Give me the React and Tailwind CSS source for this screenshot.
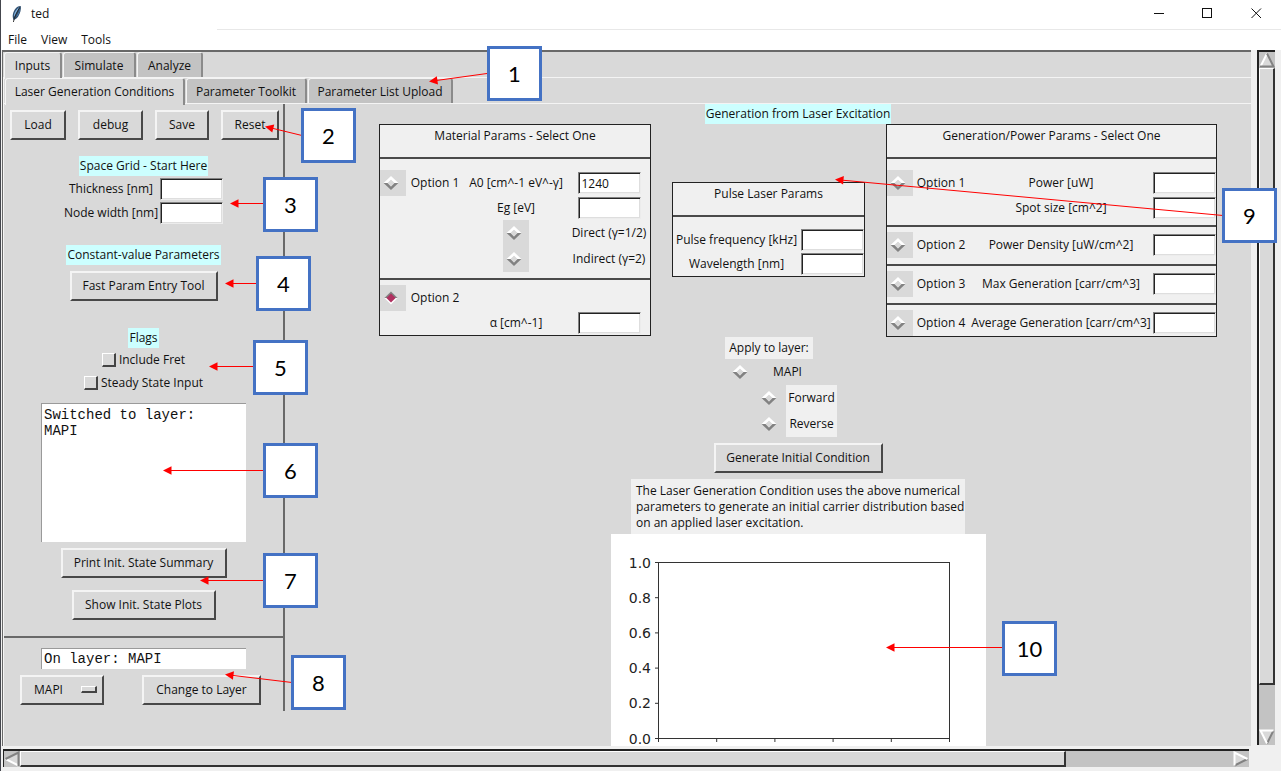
import React from "react";

const CALLOUTS = [
  { n: 1, x: 487, y: 46, from: [487, 73], to: [429, 81] },
  { n: 2, x: 301, y: 108, from: [302, 135], to: [265, 126] },
  { n: 3, x: 263, y: 177, from: [264, 203], to: [230, 203] },
  { n: 4, x: 256, y: 256, from: [257, 283], to: [225, 283] },
  { n: 5, x: 253, y: 340, from: [254, 366], to: [209, 366] },
  { n: 6, x: 263, y: 443, from: [264, 470], to: [163, 470] },
  { n: 7, x: 263, y: 553, from: [264, 580], to: [200, 580] },
  { n: 8, x: 291, y: 655, from: [292, 682], to: [225, 674] },
  { n: 9, x: 1222, y: 188, from: [1223, 215], to: [835, 179] },
  { n: 10, x: 1002, y: 621, from: [1003, 647], to: [886, 647] },
];

function Callouts() {
  return (
    <div className="pointer-events-none absolute inset-0 overflow-hidden">
      <svg className="absolute inset-0 h-full w-full" aria-hidden="true">
        {CALLOUTS.map(({ n, from, to }) => {
          const angle = (Math.atan2(from[1] - to[1], from[0] - to[0]) * 180) / Math.PI;
          return (
            <g key={n}>
              <line x1={from[0]} y1={from[1] + 0.5} x2={to[0] + 7} y2={to[1] + 0.5 + 7 * Math.tan((angle * Math.PI) / 180)} stroke="#ff0000" strokeWidth="1" />
              <path d="M0 0 L8.5 -4.2 V4.2 Z" fill="#ff0000" transform={`translate(${to[0]} ${to[1] + 0.5}) rotate(${angle})`} />
            </g>
          );
        })}
      </svg>
      {CALLOUTS.map(({ n, x, y }) => (
        <div
          key={n}
          className="absolute flex size-[55px] items-center justify-center border-3 border-[#4472c4] bg-white font-[Lato,sans-serif] text-[22px] leading-none text-black"
          style={{ left: x, top: y }}
        >
          {n}
        </div>
      ))}
    </div>
  );
}

function Feather() {
  return (
    <svg width="12" height="18" viewBox="0 0 12 18" aria-hidden="true">
      <path d="M2.6 15 C0.8 11.5 1.8 7 4.6 3.6 C6.6 1.4 8.8 .8 9.8 1.2 C10.2 4 9.4 8 7.2 11.4 C6 13.2 4.2 14.4 2.6 15Z" fill="#2f4f70" />
      <path d="M3 12 C2.6 8.5 4.6 4.6 8.4 2 C7.2 5 5.2 8 3 12Z" fill="#7fb0dd" />
      <path d="M5 12 C7 9 8.4 6 8.9 3.4 C9.2 6.4 7.6 10.2 5 12Z" fill="#4a7fb2" />
      <path d="M2.4 17 C3.4 12 5.8 6.8 8.8 2.4" fill="none" stroke="#222222" strokeWidth=".9" />
    </svg>
  );
}

function Btn({ children, className }) {
  return (
    <button
      type="button"
      className={`flex h-[30px] shrink-0 items-center justify-center whitespace-nowrap border-2 border-t-[#f4f4f4] border-l-[#f4f4f4] border-r-[#484848] border-b-[#484848] bg-[#d9d9d9] ${className}`}
    >
      {children}
    </button>
  );
}

function Entry({ id, value = "" }) {
  return (
    <input
      id={id}
      defaultValue={value}
      className="h-[22px] w-[63px] border border-t-[#828282] border-r-[#ececec] border-b-[#ececec] border-l-[#828282] bg-white pl-[3px] shadow-[inset_1px_1px_0_#222222,inset_-1px_-1px_0_#dedede] outline-none"
    />
  );
}

function Heading({ children }) {
  return <h2 className="flex h-5 items-center whitespace-nowrap bg-[#ccffff] px-px">{children}</h2>;
}

function Radio({ id, name, checked = false }) {
  return (
    <span className="relative flex size-[26px] items-center justify-center bg-[#d9d9d9]">
      <input
        type="radio"
        id={id}
        name={name}
        defaultChecked={checked}
        className="peer absolute inset-0 size-full appearance-none"
      />
      <svg width="16" height="16" viewBox="0 0 16 16" className="pointer-events-none mr-[4px] peer-checked:hidden" aria-hidden="true">
        <path d="M.6 8 L8 1 L15.4 8 H11.4 L8 4.8 L4.6 8Z" fill="#ffffff" />
        <path d="M.6 8 L8 15 L15.4 8 H11.4 L8 11.4 L4.6 8Z" fill="#828282" />
        <path d="M4.6 8 L8 4.8 L11.4 8 L8 11.4Z" fill="#d9d9d9" />
      </svg>
      <svg width="16" height="16" viewBox="0 0 16 16" className="pointer-events-none mr-[4px] hidden peer-checked:block" aria-hidden="true">
        <path d="M1.4 8 L8 1.4 L14.6 8Z" fill="#828282" />
        <path d="M1.4 8 L8 14.6 L14.6 8Z" fill="#ffffff" />
        <path d="M3.4 8 L8 3.4 L12.6 8 L8 12.6Z" fill="#b03060" />
      </svg>
    </span>
  );
}

function Check({ id, children }) {
  return (
    <label htmlFor={id} className="flex h-[23px] items-center gap-[3px]">
      <input
        type="checkbox"
        id={id}
        className="size-[14px] appearance-none border-t border-l border-r-2 border-b-2 border-t-white border-l-white border-r-[#444444] border-b-[#444444] bg-[#d9d9d9]"
      />
      {children}
    </label>
  );
}

function Tab({ children, active, className }) {
  return (
    <button
      type="button"
      role="tab"
      aria-selected={!!active}
      className={`flex items-center justify-center whitespace-nowrap rounded-t-[3px] border-t border-l border-r-2 border-t-[#f4f4f4] border-l-[#f4f4f4] border-r-[#8a8a8a] ${active ? "h-[27px] bg-[#d9d9d9] pb-px" : "h-[25px] bg-[#c3c3c3] pt-px"} ${className}`}
    >
      {children}
    </button>
  );
}

function Card({ title, children, className }) {
  return (
    <section className={`border border-[#222222] bg-[#f0f0f0] ${className}`}>
      <h3 className="flex h-[34px] items-start justify-center border-b-2 border-[#4a4a4a] pt-[3px]">{title}</h3>
      {children}
    </section>
  );
}

function LeftPanel() {
  return (
    <aside className="flex h-[607px] w-[281px] shrink-0 flex-col items-center border-r-2 border-[#696969] pt-[6px]">
      <div className="flex gap-3 self-stretch pl-[6px]">
        <Btn className="w-[56px]">Load</Btn>
        <Btn className="w-[65px]">debug</Btn>
        <Btn className="w-[54px]">Save</Btn>
        <Btn className="w-[58px]">Reset</Btn>
      </div>
      <div className="mt-4 flex flex-col items-center">
        <Heading>Space Grid - Start Here</Heading>
        <div className="mt-[2px] grid grid-cols-[auto_63px] gap-x-[2px] gap-y-[2px]">
          <label htmlFor="thickness" className="self-center text-center">Thickness [nm]</label>
          <Entry id="thickness" />
          <label htmlFor="node" className="self-center whitespace-nowrap text-center">Node width [nm]</label>
          <Entry id="node" />
        </div>
      </div>
      <div className="mt-[21px] flex flex-col items-center gap-[6px]">
        <Heading>Constant-value Parameters</Heading>
        <Btn className="w-[148px]">Fast Param Entry Tool</Btn>
      </div>
      <div className="mt-[27px] flex flex-col items-center">
        <Heading>Flags</Heading>
        <Check id="fret">Include Fret</Check>
        <Check id="steady">Steady State Input</Check>
      </div>
      <textarea
        readOnly
        aria-label="Status messages"
        defaultValue={"Switched to layer:\nMAPI"}
        className="mt-[9px] h-[139px] w-[205px] shrink-0 resize-none border-t border-l border-[#9a9a9a] bg-white px-[2px] pt-[3px] font-['Liberation_Mono',monospace] text-[14px] leading-4 outline-none"
      />
      <Btn className="mt-[6px] w-[166px]">Print Init. State Summary</Btn>
      <Btn className="mt-3 w-[144px]">Show Init. State Plots</Btn>
      <hr className="mt-4 w-full border-t-2 border-[#696969]" />
      <input
        readOnly
        aria-label="Current layer"
        defaultValue="On layer: MAPI"
        className="mt-[10px] h-[21px] w-[205px] border-t border-l border-[#9a9a9a] bg-white px-[2px] font-['Liberation_Mono',monospace] text-[14px] outline-none"
      />
      <div className="mt-[6px] flex justify-between self-stretch pr-[22px] pl-4">
        <div className="relative">
          <select
            aria-label="Layer"
            className="h-[30px] w-[84px] appearance-none border-2 border-t-[#f4f4f4] border-l-[#f4f4f4] border-r-[#484848] border-b-[#484848] bg-[#d9d9d9] pl-3 outline-none"
          >
            <option>MAPI</option>
          </select>
          <span className="pointer-events-none absolute top-[11px] right-[7px] h-[7px] w-4 border-t border-l border-r-2 border-b-2 border-t-white border-l-white border-r-[#444444] border-b-[#444444]" />
        </div>
        <Btn className="w-[119px]">Change to Layer</Btn>
      </div>
    </aside>
  );
}

function MaterialCard() {
  const grid = "grid grid-cols-[26px_58px_104px_1fr] items-center justify-items-center";
  return (
    <Card title="Material Params - Select One" className="h-[212px]">
      <div className={`${grid} grid-rows-[26px_24px_26px_26px] border-b-2 border-[#4a4a4a] pt-[11px] pb-[6px]`}>
        <Radio id="m1" name="material" />
        <label htmlFor="m1">Option 1</label>
        <label htmlFor="a0" className="whitespace-nowrap">A0 [cm^-1 eV^-γ]</label>
        <Entry id="a0" value="1240" />
        <label htmlFor="eg" className="col-start-3">Eg [eV]</label>
        <Entry id="eg" />
        <div className="col-start-3"><Radio id="direct" name="gap" /></div>
        <label htmlFor="direct" className="whitespace-nowrap">Direct (γ=1/2)</label>
        <div className="col-start-3"><Radio id="indirect" name="gap" /></div>
        <label htmlFor="indirect" className="whitespace-nowrap">Indirect (γ=2)</label>
      </div>
      <div className={`${grid} grid-rows-[26px_24px] pt-[5px]`}>
        <Radio id="m2" name="material" checked />
        <label htmlFor="m2">Option 2</label>
        <label htmlFor="alpha" className="col-start-3 row-start-2">α [cm^-1]</label>
        <div className="col-start-4 row-start-2 flex"><Entry id="alpha" /></div>
      </div>
    </Card>
  );
}

function PulseCard() {
  return (
    <Card title="Pulse Laser Params" className="mt-[58px] h-[95px] w-[193px]">
      <div className="grid grid-cols-[1fr_64px] grid-rows-[24px_24px] items-center justify-items-center pt-[11px]">
        <label htmlFor="freq" className="whitespace-nowrap">Pulse frequency [kHz]</label>
        <Entry id="freq" />
        <label htmlFor="wave">Wavelength [nm]</label>
        <Entry id="wave" />
      </div>
    </Card>
  );
}

function PowerCard() {
  const grid = "grid grid-cols-[26px_56px_184px_1fr] items-center justify-items-center";
  const rows = [
    ["p2", "Option 2", "Power Density [uW/cm^2]"],
    ["p3", "Option 3", "Max Generation [carr/cm^3]"],
    ["p4", "Option 4", "Average Generation [carr/cm^3]"],
  ];
  return (
    <Card title="Generation/Power Params - Select One" className="h-fit">
      <div className={`${grid} grid-rows-[26px_24px] pt-[11px] pb-[5px]`}>
        <Radio id="p1" name="power" />
        <label htmlFor="p1">Option 1</label>
        <label htmlFor="p1-value">Power [uW]</label>
        <Entry id="p1-value" />
        <label htmlFor="spot" className="col-start-3">Spot size [cm^2]</label>
        <Entry id="spot" />
      </div>
      {rows.map(([id, option, label]) => (
        <div key={id} className={`${grid} border-t-2 border-[#4a4a4a] pt-[5px] pb-[6px] last:pb-0`}>
          <Radio id={id} name="power" />
          <label htmlFor={id}>{option}</label>
          <label htmlFor={`${id}-value`} className="whitespace-nowrap">{label}</label>
          <Entry id={`${id}-value`} />
        </div>
      ))}
    </Card>
  );
}

function ApplyTo() {
  return (
    <div className="col-start-2 pl-[74px]">
      <div className="flex h-[22px] w-[88px] items-center justify-center bg-[#f0f0f0]">Apply to layer:</div>
      <div className="flex h-[26px] items-center gap-[18px] pl-1">
        <Radio id="mapi" name="layer" />
        <label htmlFor="mapi">MAPI</label>
      </div>
      <div className="grid w-fit grid-cols-[26px_51px] gap-x-[2px] pl-[33px]">
        <Radio id="forward" name="direction" />
        <label htmlFor="forward" className="flex items-center justify-center bg-[#f0f0f0]">Forward</label>
        <Radio id="reverse" name="direction" />
        <label htmlFor="reverse" className="flex items-center justify-center bg-[#f0f0f0]">Reverse</label>
      </div>
    </div>
  );
}

function Plot() {
  const ticks = [0, 1, 2, 3, 4, 5];
  return (
    <svg width="375" height="250" className="shrink-0 bg-white" role="img" aria-label="Empty plot">
      <rect x="47.5" y="28.5" width="291" height="176" fill="none" stroke="#333333" />
      {ticks.map((i) => (
        <g key={i}>
          <path d={`M44 ${28.5 + i * 35.2} h3.5 M${47.5 + i * 58.2} 204.5 v3.5`} stroke="#333333" />
          <text x="40" y={33.5 + i * 35.2} textAnchor="end" fontFamily="'DejaVu Sans', sans-serif" fontSize="14" fill="#222222">
            {(1 - i * 0.2).toFixed(1)}
          </text>
        </g>
      ))}
    </svg>
  );
}

function RightPanel() {
  return (
    <main className="flex min-w-0 flex-1 flex-col items-start overflow-hidden pl-[94px]">
      <div className="flex w-[838px] flex-col items-center">
        <Heading>Generation from Laser Excitation</Heading>
        <div className="grid w-full grid-cols-[272px_1fr_331px]">
          <MaterialCard />
          <div className="flex justify-center"><PulseCard /></div>
          <PowerCard />
          <ApplyTo />
        </div>
        <Btn className="mt-[6px] w-[169px]">Generate Initial Condition</Btn>
        <p className="mt-[6px] h-[55px] w-[334px] shrink-0 whitespace-nowrap bg-[#f0f0f0] pt-1 pl-[5px] leading-4">
          The Laser Generation Condition uses the above numerical
          <br />
          parameters to generate an initial carrier distribution based
          <br />
          on an applied laser excitation.
        </p>
        <Plot />
      </div>
    </main>
  );
}

function Arrow({ className }) {
  return (
    <svg width="16" height="16" viewBox="0 0 16 16" className={`shrink-0 ${className}`} aria-hidden="true">
      <path d="M8 1.5 L15 14.5 H1 Z" fill="#d9d9d9" />
      <path d="M1.5 14.5 L8 1.5" fill="none" stroke="#ffffff" strokeWidth="2" />
      <path d="M8 1.5 L14.5 14.5 H1" fill="none" stroke="#828282" strokeWidth="2" />
    </svg>
  );
}

/* Right- and down-pointing variant: the two lit edges face the top left. */
function ArrowLit({ d, lit, shade, className }) {
  return (
    <svg width="16" height="16" viewBox="0 0 16 16" className={`shrink-0 ${className}`} aria-hidden="true">
      <path d={d} fill="#d9d9d9" />
      <path d={shade} fill="none" stroke="#828282" strokeWidth="2" />
      <path d={lit} fill="none" stroke="#ffffff" strokeWidth="2" />
    </svg>
  );
}

export default function App() {
  return (
    <div className="relative h-screen overflow-hidden bg-[#f0f0f0] font-['Open_Sans','Noto_Sans',sans-serif] text-[12px] leading-4 text-[#111111]">
      <div className="flex h-full flex-col border-l border-[#44464d]">
        <header className="relative flex h-[30px] shrink-0 items-center bg-white pb-[3px] pl-[10px] after:absolute after:right-0 after:bottom-0 after:left-[216px] after:h-px after:bg-[#e8e8e8]">
          <Feather />
          <h1 className="ml-2 flex-1">ted</h1>
          <button type="button" aria-label="Minimize" className="flex h-full w-12 items-center justify-center">
            <svg width="11" height="11"><path d="M0 5.5 H10" stroke="#111111" /></svg>
          </button>
          <button type="button" aria-label="Maximize" className="flex h-full w-12 items-center justify-center">
            <svg width="11" height="11"><rect x=".5" y=".5" width="9" height="9" fill="none" stroke="#111111" /></svg>
          </button>
          <button type="button" aria-label="Close" className="flex h-full w-[50px] items-center justify-center">
            <svg width="11" height="11"><path d="M.5 .5 L10 10 M10 .5 L.5 10" stroke="#111111" /></svg>
          </button>
        </header>
        <nav className="flex h-5 shrink-0 items-center gap-[14px] bg-white pl-[7px]">
          <button type="button">File</button>
          <button type="button">View</button>
          <button type="button">Tools</button>
        </nav>
        <div className="flex min-h-0 flex-1 pl-px">
          <div className="flex min-w-0 flex-1 flex-col">
            <div className="flex min-h-0 flex-1 flex-col overflow-hidden border-t-2 border-l border-[#696969] bg-[#d9d9d9]">
              <div role="tablist" className="flex h-[26px] shrink-0 items-start gap-px border-b border-[#f4f4f4] pl-px">
                <Tab active className="w-[58px]">Inputs</Tab>
                <Tab className="w-[73px]">Simulate</Tab>
                <Tab className="w-[66px]">Analyze</Tab>
              </div>
              <div className="flex min-h-0 flex-1 flex-col border-l border-[#f4f4f4]">
                <div role="tablist" className="flex h-[26px] shrink-0 items-start gap-px border-b border-[#f4f4f4] pl-px">
                  <Tab active className="w-[180px]">Laser Generation Conditions</Tab>
                  <Tab className="w-[121px]">Parameter Toolkit</Tab>
                  <Tab className="w-[145px]">Parameter List Upload</Tab>
                </div>
                <div className="flex min-h-0 flex-1 overflow-hidden">
                  <LeftPanel />
                  <RightPanel />
                </div>
              </div>
            </div>
            <div className="mt-[3px] mr-[2px] mb-1 ml-px flex h-[18px] shrink-0 border-t-2 border-l border-[#222222] bg-[#c3c3c3]">
              <Arrow className="-rotate-90" />
              <div className="h-4 w-[84%] border-t border-l border-r-2 border-b-2 border-t-white border-l-white border-r-[#333333] border-b-[#333333] bg-[#d9d9d9]" />
              <ArrowLit d="M1.5 1.5 L14.5 8 L1.5 14.5Z" lit="M1.5 14.5 V1.5 L14.5 8" shade="M14.5 8 L1.5 14.5" className="ml-auto" />
            </div>
          </div>
          <div className="mr-[6px] mb-[26px] ml-[6px] flex w-[18px] shrink-0 flex-col border-t-2 border-l-2 border-[#222222] bg-[#c3c3c3]">
            <Arrow className="" />
            <div className="h-[89%] w-4 border-t border-l border-r-2 border-b-2 border-t-white border-l-white border-r-[#333333] border-b-[#333333] bg-[#d9d9d9]" />
            <ArrowLit d="M1.5 1.5 H14.5 L8 14.5Z" lit="M8 14.5 L1.5 1.5 H14.5" shade="M14.5 1.5 L8 14.5" className="mt-auto" />
          </div>
        </div>
      </div>
      <Callouts />
    </div>
  );
}
